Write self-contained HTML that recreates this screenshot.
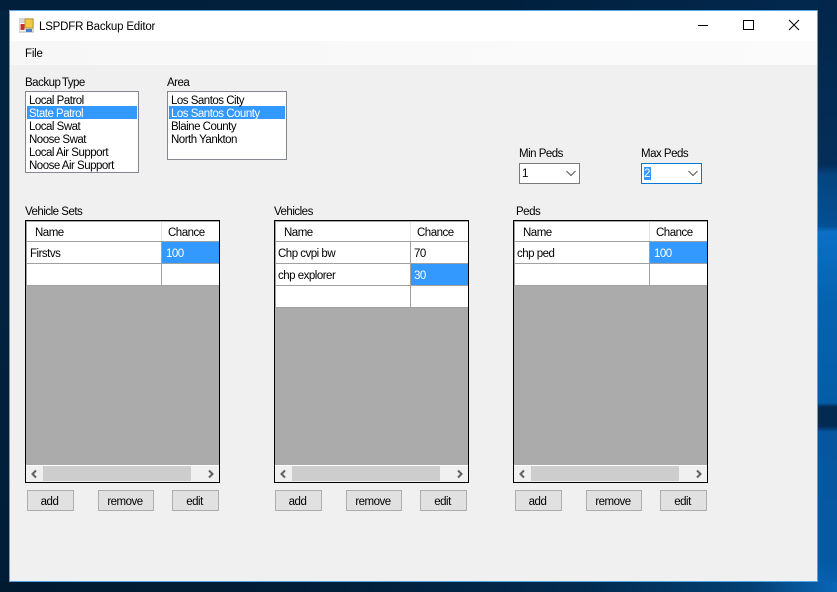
<!DOCTYPE html>
<html><head><meta charset="utf-8"><style>
html,body{margin:0;padding:0}
body{width:837px;height:592px;position:relative;overflow:hidden;background:#021e38;font-family:"Liberation Sans",sans-serif;font-size:11.5px;letter-spacing:-.5px;color:#000}
div{position:absolute;box-sizing:border-box;white-space:nowrap}
.t{line-height:14px;height:14px;margin-top:1px}
.sel{background:#3399ff;color:#fff}
.lb{background:#fff;border:1px solid #828790}
.g{width:195px;height:263px;top:220px;background:#ababab;border:1px solid #000}
.b{top:490px;height:21px;background:#e1e1e1;border:1px solid #adadad;text-align:center;line-height:23px;padding-right:2px}
.r{background:#fff;left:1px;width:192px}
.cell{line-height:25px;height:21px;top:0}
.combo{top:163px;width:61px;height:21px;background:#fff;border:1px solid #7a7a7a}
</style></head><body>
<div style="left:0;top:0;width:9px;height:592px;background:linear-gradient(#01233f,#02223f 50%,#011c36)"></div>
<div style="left:0;top:0;width:837px;height:10px;background:linear-gradient(90deg,#011f3a,#01203e 60%,#03294f)"></div>
<div style="left:818px;top:0;width:19px;height:592px;background:linear-gradient(#03264a 0,#032f5a 165px,#05457f 175px,#054f94 226px,#0b70c6 232px,#0663b0 300px,#055ca6 403px,#032a50 407px,#032a50 426px,#05569e 432px,#0559a3 560px,#0a63b5 592px)"></div>
<div style="left:0;top:582px;width:837px;height:10px;background:linear-gradient(90deg,#011a30,#021d36 35%,#032a4e 70%,#034073 90%,#0a66b8)"></div>

<div style="left:9px;top:10px;width:809px;height:572px;background:#f0f0f0;border:1px solid #52a8e4">
<div style="left:0;top:0;width:807px;height:30px;background:#fff"></div>
<div style="left:0;top:30px;width:807px;height:24px;background:linear-gradient(90deg,#f7f7f7,#fbfbfb)"></div>
</div>

<svg style="position:absolute;left:19px;top:18px" width="15" height="15" viewBox="0 0 15 15">
<rect x="0" y="0" width="15" height="15" fill="#d6d6d6"/>
<rect x="1" y="5" width="5" height="8" fill="#fff"/>
<rect x="1.500" y="6" width="4" height="6" fill="#c8332b"/>
<rect x="6" y="1" width="8" height="9" fill="#f5c842" stroke="#a88420" stroke-width=".7"/>
<rect x="7" y="11" width="6" height="3" fill="#4a7fd0"/>
</svg>
<div class="t" style="left:39px;top:19px;letter-spacing:-.2px">LSPDFR Backup Editor</div>

<svg style="position:absolute;left:690px;top:12px" width="120" height="28" viewBox="690 12 120 28" fill="none" stroke="#000">
<path d="M698 25.5H708"/>
<path d="M743.5 20.5h10v9h-10z"/>
<path d="M789 20L799 30M799 20L789 30"/>
</svg>

<div class="t" style="left:25px;top:46px;letter-spacing:-.2px">File</div>

<div class="t" style="left:25px;top:75px;word-spacing:-1px">Backup Type</div>
<div class="lb" style="left:25px;top:91px;width:114px;height:82px"></div>
<div class="sel" style="left:27px;top:106px;width:110px;height:13px"></div>
<div class="t" style="left:29px;top:93px">Local Patrol</div>
<div class="t" style="left:29px;top:106px;color:#fff">State Patrol</div>
<div class="t" style="left:29px;top:119px">Local Swat</div>
<div class="t" style="left:29px;top:132px">Noose Swat</div>
<div class="t" style="left:29px;top:145px">Local Air Support</div>
<div class="t" style="left:29px;top:158px">Noose Air Support</div>

<div class="t" style="left:167px;top:75px">Area</div>
<div class="lb" style="left:167px;top:91px;width:120px;height:69px"></div>
<div class="sel" style="left:169px;top:106px;width:116px;height:13px"></div>
<div class="t" style="left:171px;top:93px">Los Santos City</div>
<div class="t" style="left:171px;top:106px;color:#fff">Los Santos County</div>
<div class="t" style="left:171px;top:119px">Blaine County</div>
<div class="t" style="left:171px;top:132px">North Yankton</div>

<div class="t" style="left:519px;top:146px">Min Peds</div>
<div class="combo" style="left:519px"></div>
<div class="t" style="left:522px;top:166px">1</div>
<svg style="position:absolute;left:566px;top:170px" width="10" height="7" fill="none" stroke="#555"><path d="M0.5 1L5 5.500L9.500 1"/></svg>

<div class="t" style="left:641px;top:146px">Max Peds</div>
<div class="combo" style="left:641px;border-color:#0078d7"></div>
<div style="left:644px;top:167px;width:7px;height:13px;background:#3399ff"></div>
<div class="t" style="left:644px;top:166px;color:#fff">2</div>
<svg style="position:absolute;left:688px;top:170px" width="10" height="7" fill="none" stroke="#555"><path d="M0.5 1L5 5.500L9.500 1"/></svg>

<!-- Grid 1 -->
<div class="t" style="left:25px;top:204px">Vehicle Sets</div>
<div class="g" style="left:25px">
<div style="left:0;top:0;width:1px;height:65px;background:#a0a0a0"></div>
<div class="r" style="top:1px;height:20px;border-bottom:1px solid #a0a0a0"></div>
<div style="left:135px;top:1px;width:1px;height:19px;background:#e4e4e4"></div>
<div class="t" style="left:9px;top:4px">Name</div><div class="t" style="left:142px;top:4px">Chance</div>
<div class="r" style="top:21px;height:22px;border-bottom:1px solid #a0a0a0"></div>
<div class="r" style="top:43px;height:22px;border-bottom:1px solid #a0a0a0"></div>
<div class="cell" style="left:4px;top:21px">Firstvs</div>
<div class="sel cell" style="left:136px;top:21px;width:57px;padding-left:4px">100</div>
<div style="left:135px;top:21px;width:1px;height:44px;background:#a0a0a0"></div>
<div style="left:0;top:244px;width:193px;height:17px;background:#f0f0f0;border-top:1px solid #fff"></div>
<div style="left:17px;top:245px;width:148px;height:15px;background:#cdcdcd"></div>
<svg style="position:absolute;left:0;top:245px" width="193" height="16" fill="none" stroke="#606060" stroke-width="2"><path d="M10 4.500L6.500 8L10 11.500M183 4.500L186.500 8L183 11.500"/></svg>
</div>
<div class="b" style="left:27px;width:47px">add</div>
<div class="b" style="left:98px;width:56px">remove</div>
<div class="b" style="left:172px;width:47px">edit</div>

<!-- Grid 2 -->
<div class="t" style="left:274px;top:204px">Vehicles</div>
<div class="g" style="left:274px">
<div style="left:0;top:0;width:1px;height:87px;background:#a0a0a0"></div>
<div class="r" style="top:1px;height:20px;border-bottom:1px solid #a0a0a0"></div>
<div style="left:135px;top:1px;width:1px;height:19px;background:#e4e4e4"></div>
<div class="t" style="left:9px;top:4px">Name</div><div class="t" style="left:142px;top:4px">Chance</div>
<div class="r" style="top:21px;height:22px;border-bottom:1px solid #a0a0a0"></div>
<div class="r" style="top:43px;height:22px;border-bottom:1px solid #a0a0a0"></div>
<div class="r" style="top:65px;height:22px;border-bottom:1px solid #a0a0a0"></div>
<div class="cell" style="left:3px;top:21px">Chp cvpi bw</div>
<div class="cell" style="left:139px;top:21px">70</div>
<div class="cell" style="left:3px;top:43px">chp explorer</div>
<div class="sel cell" style="left:136px;top:43px;width:57px;padding-left:3px">30</div>
<div style="left:135px;top:21px;width:1px;height:66px;background:#a0a0a0"></div>
<div style="left:0;top:244px;width:193px;height:17px;background:#f0f0f0;border-top:1px solid #fff"></div>
<div style="left:17px;top:245px;width:148px;height:15px;background:#cdcdcd"></div>
<svg style="position:absolute;left:0;top:245px" width="193" height="16" fill="none" stroke="#606060" stroke-width="2"><path d="M10 4.500L6.500 8L10 11.500M183 4.500L186.500 8L183 11.500"/></svg>
</div>
<div class="b" style="left:275px;width:47px">add</div>
<div class="b" style="left:346px;width:56px">remove</div>
<div class="b" style="left:420px;width:47px">edit</div>

<!-- Grid 3 -->
<div class="t" style="left:516px;top:204px">Peds</div>
<div class="g" style="left:513px">
<div style="left:0;top:0;width:1px;height:65px;background:#a0a0a0"></div>
<div class="r" style="top:1px;height:20px;border-bottom:1px solid #a0a0a0"></div>
<div style="left:135px;top:1px;width:1px;height:19px;background:#e4e4e4"></div>
<div class="t" style="left:9px;top:4px">Name</div><div class="t" style="left:142px;top:4px">Chance</div>
<div class="r" style="top:21px;height:22px;border-bottom:1px solid #a0a0a0"></div>
<div class="r" style="top:43px;height:22px;border-bottom:1px solid #a0a0a0"></div>
<div class="cell" style="left:3px;top:21px">chp ped</div>
<div class="sel cell" style="left:136px;top:21px;width:57px;padding-left:4px">100</div>
<div style="left:135px;top:21px;width:1px;height:44px;background:#a0a0a0"></div>
<div style="left:0;top:244px;width:193px;height:17px;background:#f0f0f0;border-top:1px solid #fff"></div>
<div style="left:17px;top:245px;width:148px;height:15px;background:#cdcdcd"></div>
<svg style="position:absolute;left:0;top:245px" width="193" height="16" fill="none" stroke="#606060" stroke-width="2"><path d="M10 4.500L6.500 8L10 11.500M183 4.500L186.500 8L183 11.500"/></svg>
</div>
<div class="b" style="left:515px;width:47px">add</div>
<div class="b" style="left:586px;width:56px">remove</div>
<div class="b" style="left:660px;width:47px">edit</div>
</body></html>
